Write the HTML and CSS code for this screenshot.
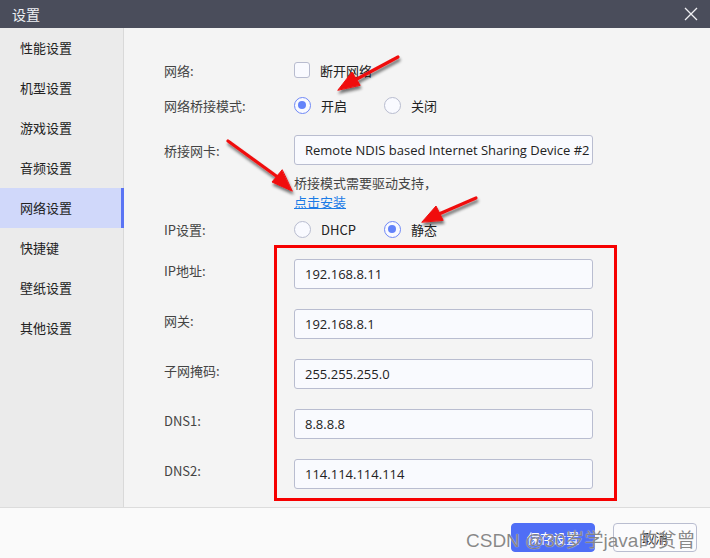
FILE: index.html
```html
<!DOCTYPE html>
<html lang="zh">
<head>
<meta charset="utf-8">
<link rel="stylesheet" href="styles.css">
</head>
<body>
<div class="window">
  <div class="titlebar">
    <span class="title">设置</span>
    <svg class="close" width="14" height="14" viewBox="0 0 14 14"><path d="M1 1 L13 13 M13 1 L1 13" stroke="#f0f0f4" stroke-width="1.3" fill="none"/></svg>
  </div>
  <div class="main">
    <nav class="sidebar">
      <div class="nav-item">性能设置</div>
      <div class="nav-item">机型设置</div>
      <div class="nav-item">游戏设置</div>
      <div class="nav-item">音频设置</div>
      <div class="nav-item active">网络设置</div>
      <div class="nav-item">快捷键</div>
      <div class="nav-item">壁纸设置</div>
      <div class="nav-item">其他设置</div>
    </nav>
    <section class="content">
      <div class="row r-net">
        <div class="label">网络:</div>
        <div class="ctrl"><span class="checkbox"></span><span class="opt">断开网络</span></div>
      </div>
      <div class="row r-mode">
        <div class="label">网络桥接模式:</div>
        <div class="ctrl">
          <span class="choice"><span class="radio on"></span><span class="opt">开启</span></span>
          <span class="choice"><span class="radio"></span><span class="opt">关闭</span></span>
        </div>
      </div>
      <div class="row r-card">
        <div class="label">桥接网卡:</div>
        <div class="ctrl"><div class="input">Remote NDIS based Internet Sharing Device #2</div></div>
      </div>
      <div class="hint">
        <div class="hint-text">桥接模式需要驱动支持，</div>
        <a class="link">点击安装</a>
      </div>
      <div class="row r-ip">
        <div class="label">IP设置:</div>
        <div class="ctrl">
          <span class="choice"><span class="radio"></span><span class="opt">DHCP</span></span>
          <span class="choice"><span class="radio on"></span><span class="opt">静态</span></span>
        </div>
      </div>
      <div class="row r-field first">
        <div class="label">IP地址:</div>
        <div class="ctrl"><div class="input">192.168.8.11</div></div>
      </div>
      <div class="row r-field">
        <div class="label">网关:</div>
        <div class="ctrl"><div class="input">192.168.8.1</div></div>
      </div>
      <div class="row r-field">
        <div class="label">子网掩码:</div>
        <div class="ctrl"><div class="input">255.255.255.0</div></div>
      </div>
      <div class="row r-field">
        <div class="label">DNS1:</div>
        <div class="ctrl"><div class="input">8.8.8.8</div></div>
      </div>
      <div class="row r-field">
        <div class="label">DNS2:</div>
        <div class="ctrl"><div class="input">114.114.114.114</div></div>
      </div>
    </section>
  </div>
  <footer class="footer">
    <button class="btn primary">保存设置</button>
    <button class="btn">取消</button>
  </footer>

  <div class="highlight"></div>
  <svg class="arrows" width="710" height="558" viewBox="0 0 710 558">
    <defs>
      <filter id="sh" x="-20%" y="-20%" width="140%" height="140%">
        <feGaussianBlur in="SourceAlpha" stdDeviation="1.6"/>
        <feOffset dx="1" dy="3" result="b"/>
        <feComponentTransfer><feFuncA type="linear" slope="0.55"/></feComponentTransfer>
        <feMerge><feMergeNode/><feMergeNode in="SourceGraphic"/></feMerge>
      </filter>
    </defs>
    <g filter="url(#sh)" fill="#f01010" stroke="#f01010" stroke-linecap="round">
      <line x1="398" y1="57" x2="355" y2="80" stroke-width="3.2"/>
      <polygon points="338,90 352,72 360,85" stroke-width="1"/>
      <line x1="228" y1="141" x2="279" y2="178" stroke-width="3.2"/>
      <polygon points="292,191 272,182 282,170" stroke-width="1"/>
      <line x1="476" y1="198" x2="439" y2="214" stroke-width="3.2"/>
      <polygon points="422,222 436,206 443,220" stroke-width="1"/>
    </g>
  </svg>
  <div class="watermark">CSDN @30岁学java的贫曾</div>
</div>
</body>
</html>
```
FILE: styles.css
```css
* { box-sizing: border-box; }
html, body { margin: 0; padding: 0; }
body {
  width: 710px;
  height: 558px;
  overflow: hidden;
  font-family: "Noto Sans CJK SC", "Noto Sans", sans-serif;
  font-size: 13px;
  color: #333;
}
.window {
  position: relative;
  width: 710px;
  height: 558px;
  display: flex;
  flex-direction: column;
  background: #f4f4f4;
}
.titlebar {
  height: 28px;
  flex: none;
  background: #4a4d5b;
  display: flex;
  align-items: center;
  justify-content: space-between;
  padding: 0 12px 0 12px;
}
.title {
  color: #eef0f4;
  font-size: 14px;
}
.close { display: block; margin-right: 0; }
.main {
  display: flex;
  height: 479px;
  flex: none;
}
.sidebar {
  width: 124px;
  flex: none;
  background: #ebebeb;
  border-right: 1px solid #d9d9d9;
  padding-top: 0;
}
.nav-item {
  height: 40px;
  line-height: 40px;
  padding-left: 20px;
  color: #222;
  font-size: 13px;
}
.nav-item.active {
  background: #d0d8fa;
  box-shadow: inset -3px 0 0 #5a74f4;
  margin-right: -1px;
}
.content {
  flex: 1;
  padding: 27px 0 0 40px;
  position: relative;
}
.row {
  display: flex;
  align-items: center;
  height: 30px;
}
.label {
  width: 130px;
  flex: none;
  color: #444;
}
.ctrl {
  display: flex;
  align-items: center;
}
.r-mode { margin-top: 5px; }
.r-card { margin-top: 15px; }
.r-ip { margin-top: 3px; }
.r-field { margin-top: 20px; }
.r-field.first { margin-top: 15px; }
.r-field .label { margin-bottom: 7px; }
.checkbox {
  width: 16px;
  height: 16px;
  border: 1px solid #b8bccf;
  border-radius: 3px;
  background: #f9faff;
}
.opt {
  margin-left: 10px;
  color: #222;
}
.choice {
  display: flex;
  align-items: center;
  width: 90px;
}
.radio {
  width: 17px;
  height: 17px;
  border-radius: 50%;
  border: 1px solid #b8bccf;
  background: #f9faff;
  position: relative;
  flex: none;
}
.radio.on {
  border: 1.5px solid #6f88f6;
  background: #f9faff;
}
.radio.on::after {
  content: "";
  position: absolute;
  left: 3px;
  top: 3px;
  width: 8px;
  height: 8px;
  border-radius: 50%;
  background: #6383fa;
}
.input {
  width: 299px;
  height: 30px;
  border: 1px solid #b9bdd0;
  border-radius: 3px;
  background: #f9fafe;
  padding-left: 10px;
  line-height: 28px;
  color: #222;
  white-space: nowrap;
  overflow: hidden;
  font-family: "Open Sans", "Noto Sans CJK SC", sans-serif;
  font-size: 13px;
}
.hint {
  margin-left: 130px;
  margin-top: 8px;
  line-height: 19px;
  margin-bottom: 3px;
}
.hint-text { color: #444; }
.link {
  color: #1b7be6;
  text-decoration: underline;
}
.footer {
  flex: 1;
  background: #fafafa;
  border-top: 1px solid #dcdcdc;
  display: flex;
  justify-content: flex-end;
  align-items: center;
  gap: 18px;
  padding: 0 13px 0 0;
}
.btn {
  width: 84px;
  height: 29px;
  border: 1px solid #b9bdd0;
  border-radius: 4px;
  background: #fbfbfd;
  font-family: "Noto Sans CJK SC", sans-serif;
  font-size: 13px;
  color: #222;
  margin-top: 8px;
}
.btn.primary {
  background: #4f6ef6;
  border-color: #4f6ef6;
  color: #fff;
}
.highlight {
  position: absolute;
  left: 274px;
  top: 245px;
  width: 343px;
  height: 256px;
  border: 3px solid #f60000;
  pointer-events: none;
}
.arrows {
  position: absolute;
  left: 0;
  top: 0;
  pointer-events: none;
}
.watermark {
  position: absolute;
  left: 466px;
  top: 525px;
  font-family: "Liberation Sans", "Noto Sans CJK SC", sans-serif;
  font-size: 19px;
  color: rgba(115, 115, 115, 0.85);
  text-shadow: 0 0 1px rgba(255, 255, 255, 0.9);
  white-space: nowrap;
  pointer-events: none;
}
```
